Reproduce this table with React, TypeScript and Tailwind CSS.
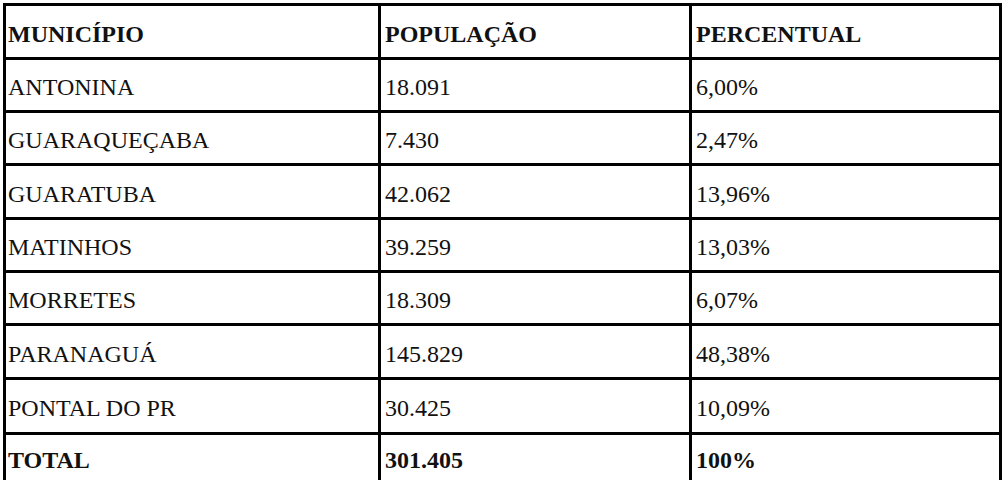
import { Fragment, type ReactNode } from "react"

const rows = [
  ["ANTONINA", "18.091", "6,00%"],
  ["GUARAQUEÇABA", "7.430", "2,47%"],
  ["GUARATUBA", "42.062", "13,96%"],
  ["MATINHOS", "39.259", "13,03%"],
  ["MORRETES", "18.309", "6,07%"],
  ["PARANAGUÁ", "145.829", "48,38%"],
  ["PONTAL DO PR", "30.425", "10,09%"],
]

function Cell({ children, bold, first }: { children: ReactNode; bold?: boolean; first?: boolean }) {
  return (
    <div
      className={`flex items-center bg-white ${first ? "pl-[2px]" : "pl-[4px]"} ${bold ? "font-bold pt-[5px]" : "pt-[4px]"}`}
    >
      {children}
    </div>
  )
}

export default function App() {
  return (
    <div className="h-[484px] w-[1007px] overflow-hidden bg-white">
      <div className="ml-[3px] mt-[3px] grid w-[999px] grid-cols-[372px_308px_307px] grid-rows-[51px_50px_50px_51px_50px_50px_51px_52px_45px] gap-[3px] bg-black p-[3px] pb-0 font-['Liberation_Serif',serif] text-[24px] leading-none text-[#111]">
        <Cell bold first>MUNICÍPIO</Cell>
        <Cell bold>POPULAÇÃO</Cell>
        <Cell bold>PERCENTUAL</Cell>
        {rows.map((r) => (
          <Fragment key={r[0]}>
            <Cell first>{r[0]}</Cell>
            <Cell>{r[1]}</Cell>
            <Cell>{r[2]}</Cell>
          </Fragment>
        ))}
        <Cell bold first>TOTAL</Cell>
        <Cell bold>301.405</Cell>
        <Cell bold>100%</Cell>
      </div>
    </div>
  )
}
